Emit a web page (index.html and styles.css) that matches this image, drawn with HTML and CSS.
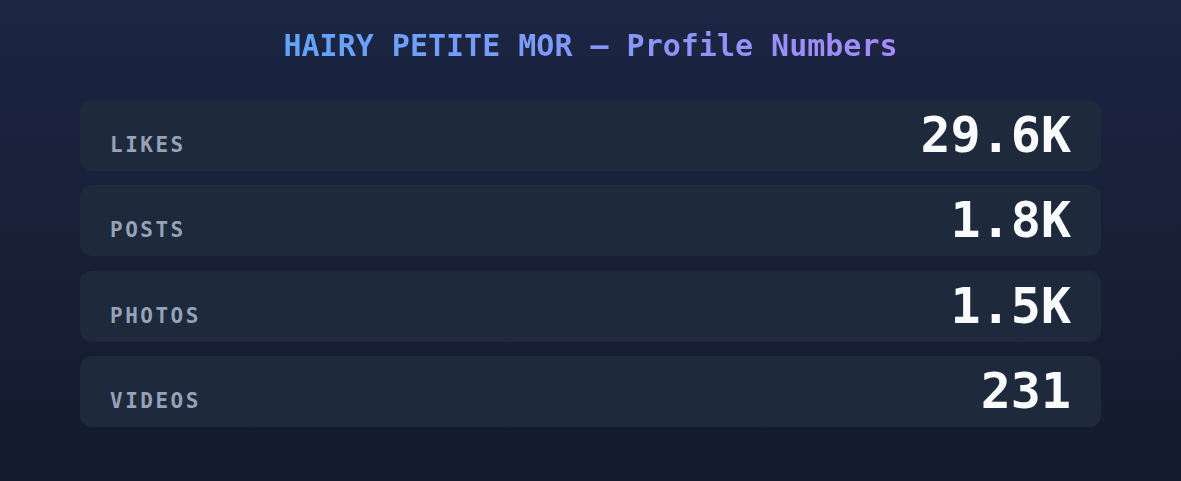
FILE: index.html
```html
<!DOCTYPE html>
<html lang="en">
<head>
    <meta charset="UTF-8">
    <meta name="viewport" content="width=device-width, initial-scale=1.0">
    <title>Profile Numbers</title>
    <link rel="stylesheet" href="styles.css">
</head>
<body>
    <div class="wrap">
        <h1 class="title"><span>HAIRY PETITE MOR — Profile Numbers</span></h1>
        <div class="stats">
            <div class="stat">
                <span class="label">LIKES</span>
                <span class="value">29.6K</span>
            </div>
            <div class="stat">
                <span class="label">POSTS</span>
                <span class="value">1.8K</span>
            </div>
            <div class="stat">
                <span class="label">PHOTOS</span>
                <span class="value">1.5K</span>
            </div>
            <div class="stat">
                <span class="label">VIDEOS</span>
                <span class="value">231</span>
            </div>
        </div>
    </div>
</body>
</html>
```

FILE: styles.css
```css
html, body {
    height: 100%;
}
body {
    margin: 0;
    font-family: "DejaVu Sans Mono", monospace;
    background: linear-gradient(180deg, #1c2542 0%, #141b2e 100%);
    color: #f8fafc;
}
.wrap {
    padding: 28px 80px 0 80px;
}
.title {
    margin: 0 0 36px 0;
    text-align: center;
    font-size: 30px;
    line-height: 36px;
    font-weight: bold;
}
.title span {
    background: linear-gradient(90deg, #60a5fa, #a78bfa);
    -webkit-background-clip: text;
    background-clip: text;
    color: transparent;
}
.stats {
    display: flex;
    flex-direction: column;
    gap: 14.33px;
}
.stat {
    display: flex;
    justify-content: space-between;
    align-items: baseline;
    height: 71px;
    box-sizing: border-box;
    padding: 10px 30px;
    background: #1e293b;
    border-radius: 12px;
}
.label {
    font-size: 21px;
    font-weight: bold;
    letter-spacing: 2.5px;
    color: #94a3b8;
}
.value {
    font-size: 50px;
    line-height: 50px;
    font-weight: bold;
    color: #f8fafc;
}
```
